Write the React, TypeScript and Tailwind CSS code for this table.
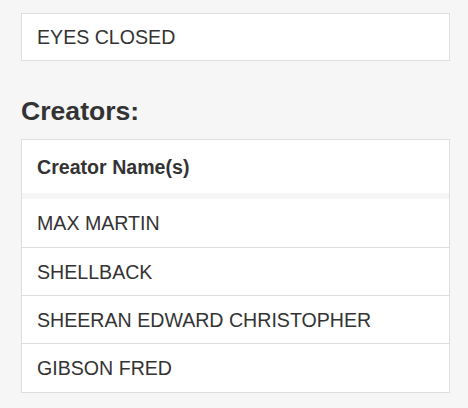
export default function App() {
  const rows = ["MAX MARTIN", "SHELLBACK", "SHEERAN EDWARD CHRISTOPHER", "GIBSON FRED"];
  return (
    <div
      className="min-h-[408px] w-[468px] bg-[#f6f6f6] px-[21px] pt-[13px] text-[#333333]"
      style={{ fontFamily: '"Liberation Sans", Arial, sans-serif' }}
    >
      <div className="flex h-[48px] w-[429px] items-center border border-[#dddddd] bg-white px-[15px] text-[19.6px] leading-[28px]">
        EYES CLOSED
      </div>
      <h2 className="mt-[36px] mb-[13px] text-[26.6px] font-bold leading-[29px]">Creators:</h2>
      <div className="w-[429px] border border-[#dddddd] bg-white">
        <div className="flex h-[53px] items-center px-[15px] text-[19.6px] font-bold leading-[28px]">
          Creator Name(s)
        </div>
        <div className="h-[6px] bg-[#f6f6f6]" />
        {rows.map((r, i) => (
          <div
            key={r}
            className={
              (i === 0 ? "h-[49px] " : "h-[48px] ") +
              (i < rows.length - 1 ? "border-b border-[#dddddd] " : "") +
              "flex items-center px-[15px] text-[19.6px] leading-[28px]"
            }
          >
            {r}
          </div>
        ))}
      </div>
    </div>
  );
}
